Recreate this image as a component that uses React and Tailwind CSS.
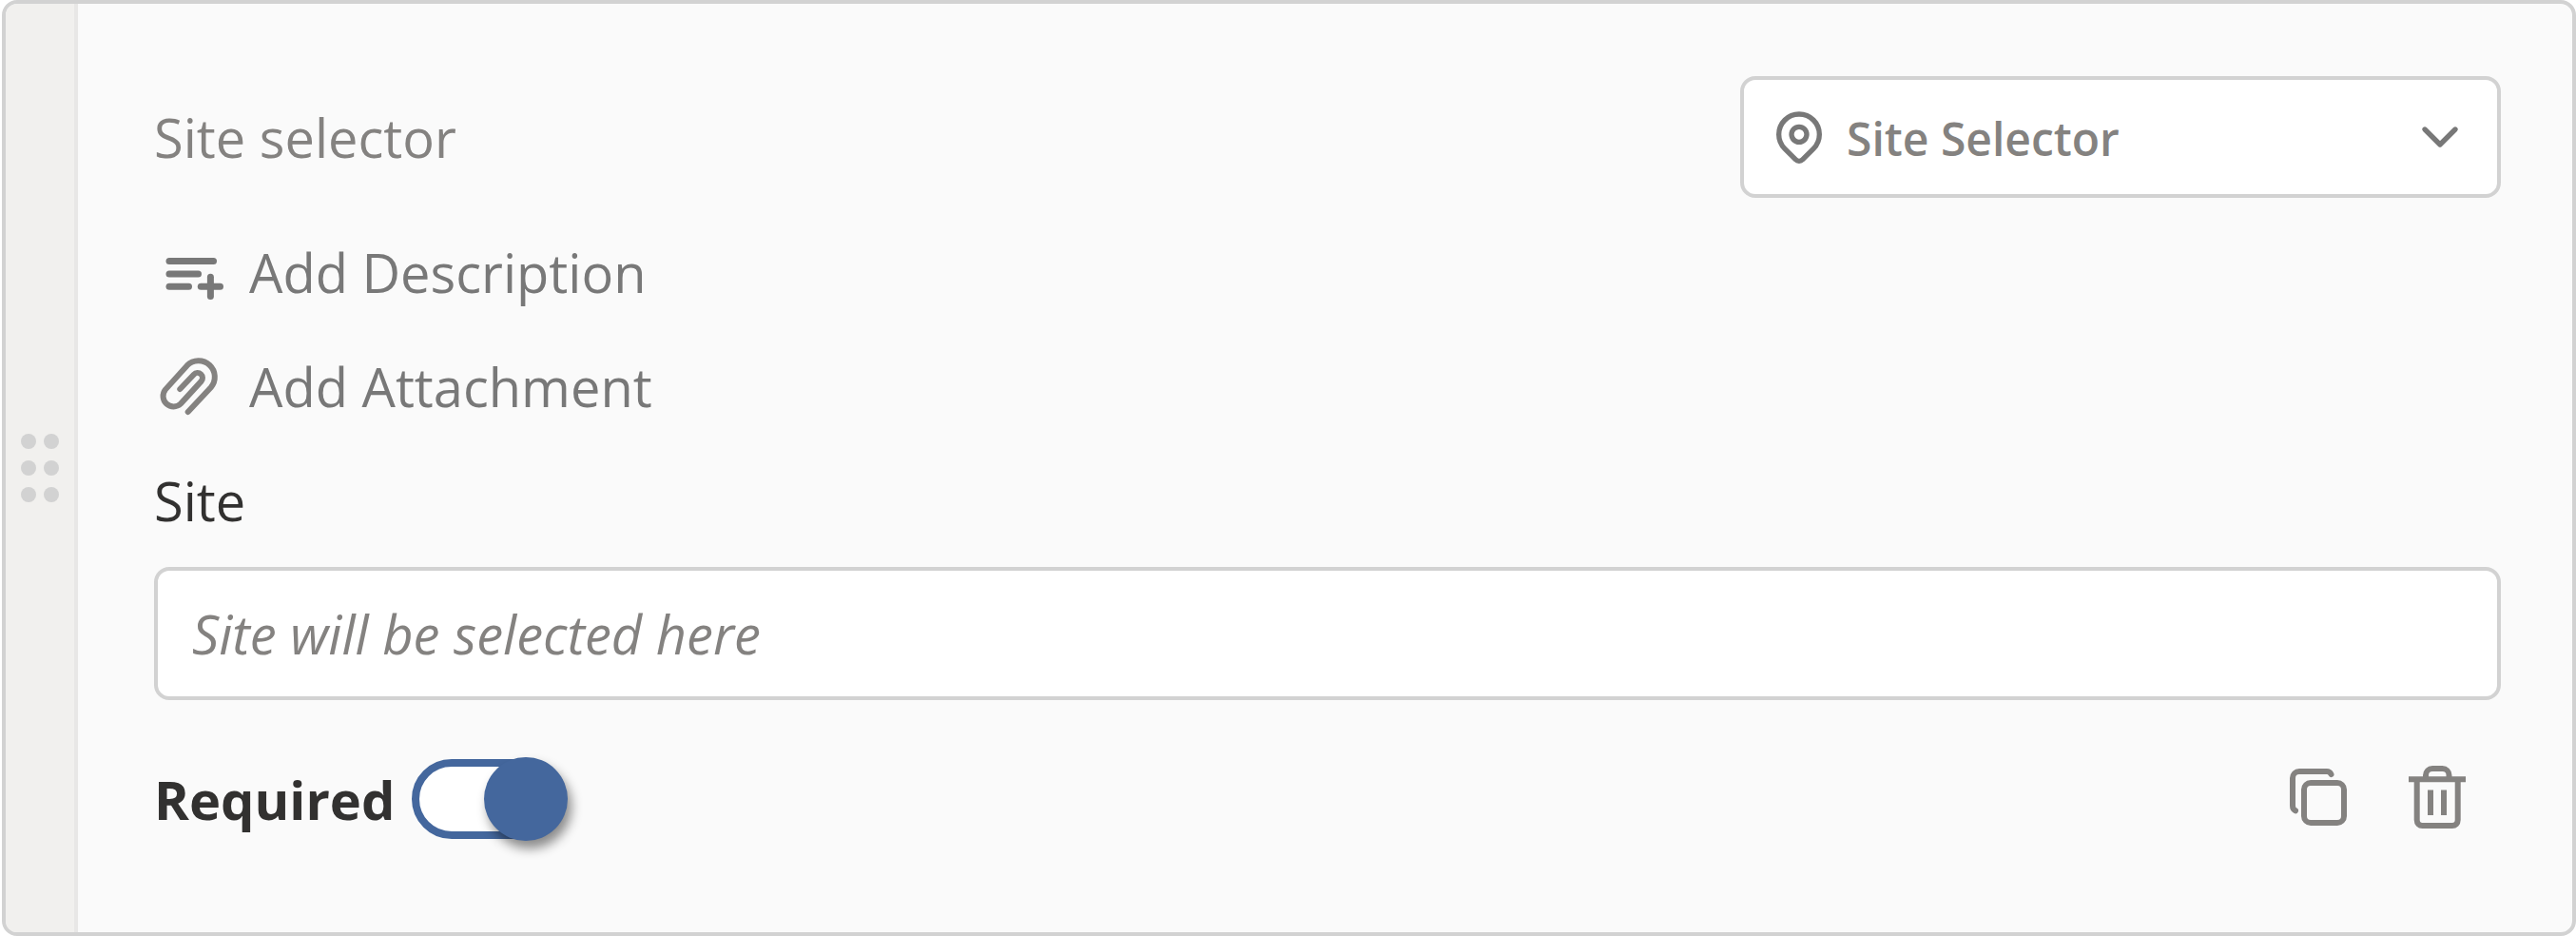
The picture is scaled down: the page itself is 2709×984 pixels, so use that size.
import { useState } from "react";
import { TbChevronDown, TbMapPin } from "react-icons/tb";

function DragHandle() {
  return (
    <button
      type="button"
      aria-label="Reorder question"
      className="flex w-19 shrink-0 cursor-grab items-center justify-center border-r-4 border-[#e8e7e6] bg-[#f1f0ee]"
    >
      <span className="grid grid-cols-2 gap-x-2 gap-y-3">
        {[0, 1, 2, 3, 4, 5].map((dot) => (
          <span key={dot} className="size-4 rounded-full bg-[#d2d2d2]" />
        ))}
      </span>
    </button>
  );
}

function DescriptionIcon() {
  return (
    <svg viewBox="0 0 80 80" className="size-20" fill="none" stroke="#787878" strokeWidth="7" strokeLinecap="round" aria-hidden="true">
      <path d="M16 28.5H62.5" />
      <path d="M16 42H46.5" />
      <path d="M16 55.3H36.5" />
      <path d="M49.3 55.3H69.5" />
      <path d="M59.4 45.2V65.5" />
    </svg>
  );
}

function AttachmentIcon() {
  return (
    <svg viewBox="0 0 80 80" className="size-20" fill="none" stroke="#848280" strokeWidth="6" strokeLinecap="round" aria-hidden="true">
      <path d="M35.7 67L59.8 41.2A17 17 0 0 0 34.8 18.2L11.9 43.6A11 11 0 0 0 28.1 58.4L49.6 34.9A5.3 5.3 0 0 0 41.8 27.7L27.3 43" />
    </svg>
  );
}

function CopyIcon() {
  return (
    <svg viewBox="0 0 80 80" className="size-20" fill="none" stroke="#848280" strokeWidth="6" strokeLinecap="round" aria-hidden="true">
      <rect x="23" y="23" width="42" height="42" rx="7" />
      <path d="M51.5 14C50.5 12 49 11 47 11H18C14 11 11 14 11 18V47C11 49.5 12 51.3 14 52.3" />
    </svg>
  );
}

function TrashIcon() {
  return (
    <svg viewBox="0 0 80 80" className="size-20" fill="none" stroke="#848280" strokeWidth="6" aria-hidden="true">
      <path d="M9 19.2H69" />
      <path d="M27 19V15C27 11 30 8 34 8H44.5C48.5 8 51.5 11 51.5 15V19" />
      <path d="M17.7 19V62C17.7 65.5 20 68 23.5 68H54.8C58.3 68 60.7 65.5 60.7 62V19" />
      <path d="M32 30.5V57" />
      <path d="M46 30.5V57" />
    </svg>
  );
}

export default function App() {
  const [title, setTitle] = useState("Site selector");
  const [required, setRequired] = useState(true);

  return (
    <div className="ml-0.5 flex overflow-hidden rounded-2xl border-4 border-[#d2d2d2] bg-[#fafafa] font-['Open_Sans','Noto_Sans',sans-serif] text-[56px] leading-[80px] text-[#323130]">
      <DragHandle />

      <div className="min-w-0 flex-1 pt-19 pr-[75px] pb-24 pl-20">
        {/* Title and question type */}
        <div className="flex items-center justify-between gap-10">
          <input
            type="text"
            aria-label="Question title"
            value={title}
            onChange={(e) => setTitle(e.target.value)}
            className="h-20 min-w-0 flex-1 bg-transparent text-[#848280] outline-none"
          />
          <div className="relative w-[800px] shrink-0">
            <select
              aria-label="Question type"
              className="h-32 w-full appearance-none rounded-2xl border-4 border-[#d2d2d2] bg-white pt-1 pr-24 pl-[108px] text-5xl font-semibold text-[#848280]"
            >
              <option>Site Selector</option>
            </select>
            <TbMapPin className="pointer-events-none absolute top-8 left-[30px] size-16 text-[#787878]" />
            <TbChevronDown className="pointer-events-none absolute top-8 right-8 size-16 text-[#787878]" />
          </div>
        </div>

        {/* Optional extras */}
        <div className="mt-[38px] flex flex-col items-start gap-10 text-[#787878]">
          <button type="button" className="flex items-center gap-5">
            <DescriptionIcon />
            Add Description
          </button>
          <button type="button" className="flex items-center gap-5">
            <AttachmentIcon />
            Add Attachment
          </button>
        </div>

        {/* Answer */}
        <label htmlFor="site" className="mt-10 block">Site</label>
        <input
          id="site"
          type="text"
          readOnly
          placeholder="Site will be selected here"
          className="mt-[30px] block h-[140px] w-full rounded-2xl border-4 border-[#d2d2d2] bg-white px-9 italic outline-none placeholder:text-[#848280]"
        />

        {/* Footer */}
        <div className="mt-15 flex h-22 items-center justify-between">
          <label className="flex items-center gap-[18px] font-bold">
            Required
            <span className="relative flex">
              <input
                type="checkbox"
                role="switch"
                checked={required}
                onChange={(e) => setRequired(e.target.checked)}
                className="peer h-21 w-40 appearance-none rounded-full border-8 border-[#44679d] bg-white"
              />
              <span className="pointer-events-none absolute -top-0.5 -left-1 size-22 rounded-full bg-[#44679d] shadow-[4px_8px_12px_rgba(0,0,0,0.45)] peer-checked:right-[-4px] peer-checked:left-auto" />
            </span>
          </label>
          <div className="flex gap-11 pr-[26px]">
            <button type="button" aria-label="Duplicate question">
              <CopyIcon />
            </button>
            <button type="button" aria-label="Delete question">
              <TrashIcon />
            </button>
          </div>
        </div>
      </div>
    </div>
  );
}
